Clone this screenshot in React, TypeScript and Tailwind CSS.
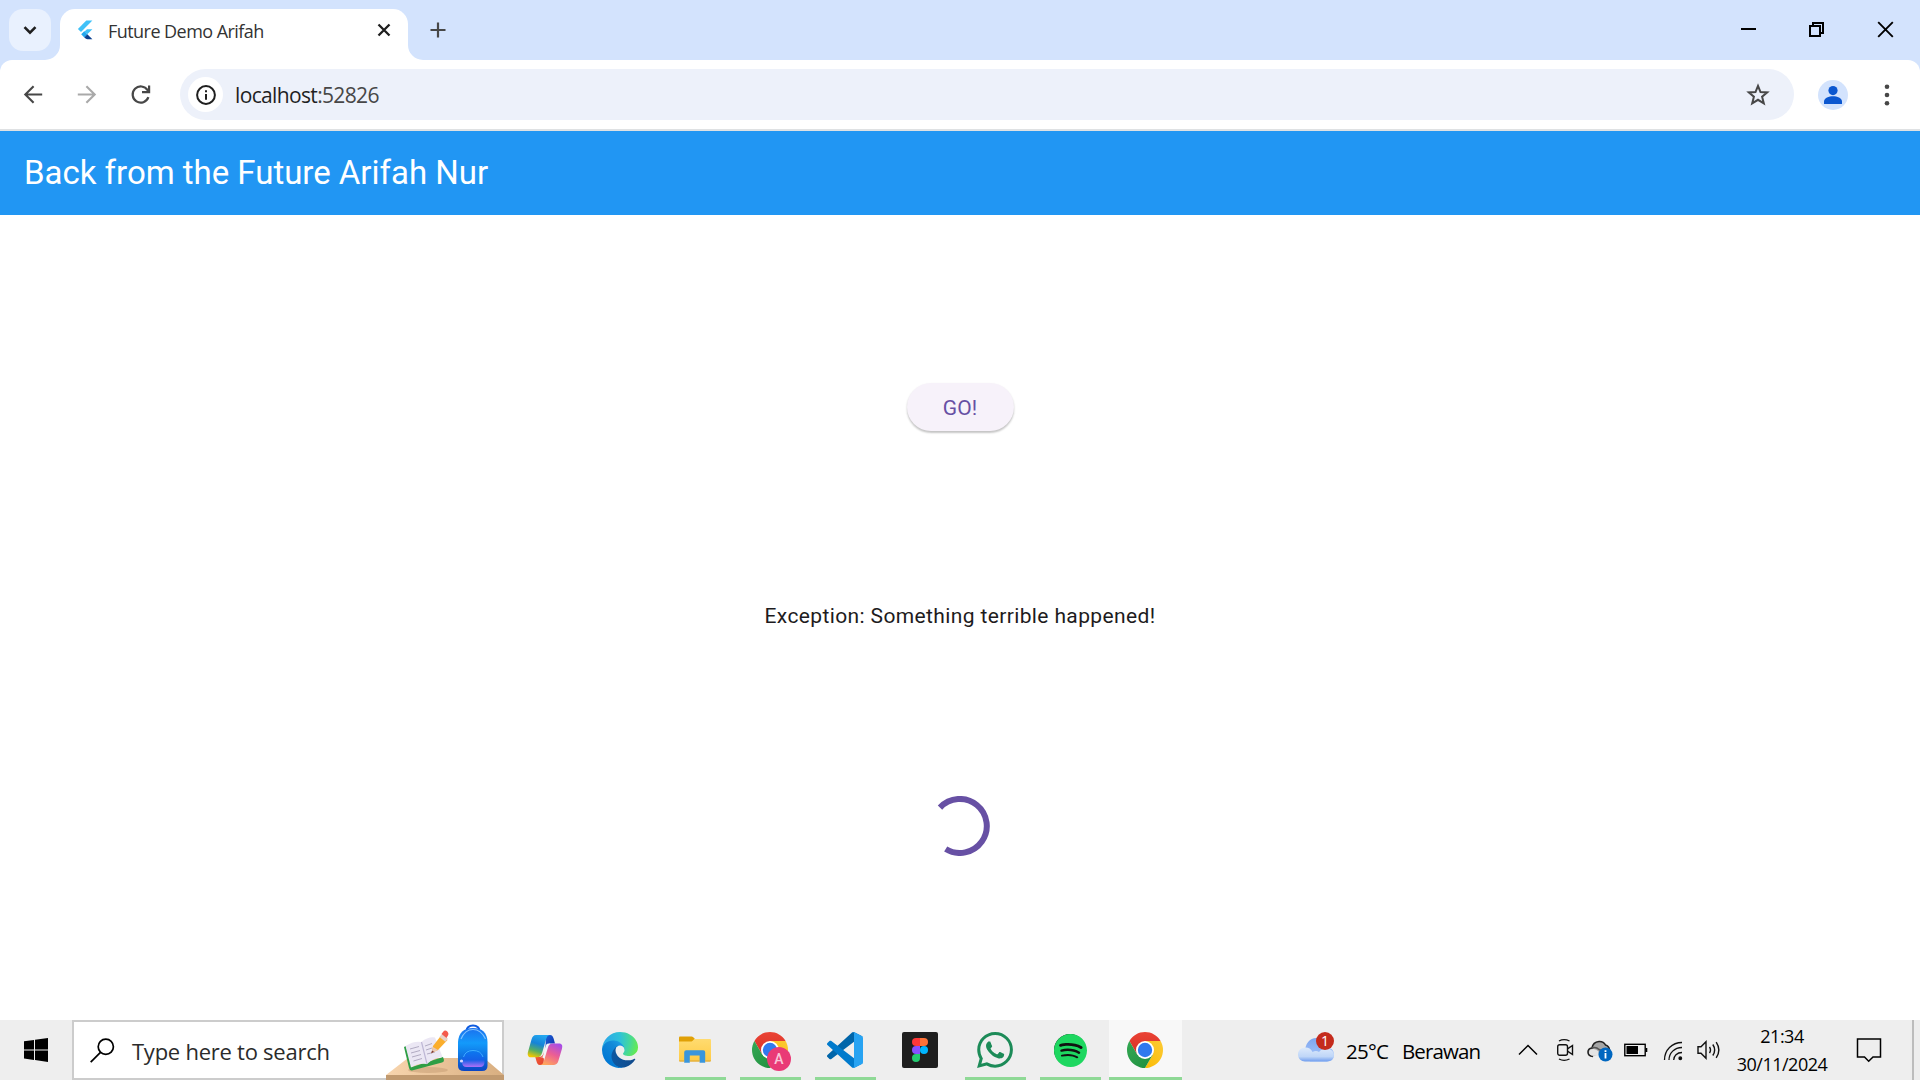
import React from 'react';
import { SiSpotify, SiWhatsapp } from 'react-icons/si';

/* ---------- Browser icons ---------- */

function FlutterLogo() {
  return (
    <svg className="block h-[20px] w-[16px]" viewBox="0 0 16 20">
      <path d="M9.3 0.6H15.4L4 12L0.9 8.9Z" fill="#3FC1F8" />
      <path d="M10 9.2H15.4L10.2 14.3L7.2 11.7Z" fill="#3FC1F8" />
      <path d="M4.2 14.3L7.2 11.3L10.4 14.4L7.3 17.5Z" fill="#24A8EE" />
      <path d="M7.3 17.4L10.3 14.3L15.4 19.3H10.5Q9.4 19.3 8.6 18.6Z" fill="#0A3F8F" />
    </svg>
  );
}

function ArrowIcon({ className }: { className: string }) {
  return (
    <svg className={className} viewBox="0 0 27 27" fill="none" stroke="currentColor" strokeWidth="2.1">
      <path d="M22.2 13.5H5.6M13.6 5.2L5.3 13.5L13.6 21.8" />
    </svg>
  );
}

function ReloadIcon() {
  return (
    <svg className="block size-[27px]" viewBox="0 0 27 27" fill="none" stroke="#474747" strokeWidth="2.2">
      <path d="M21.4 16.2A8.1 8.1 0 1 1 20.6 9.2L22 11" />
      <path d="M22.1 4.6V11.2H15" />
    </svg>
  );
}

function InfoIcon() {
  return (
    <svg className="block size-[20px]" viewBox="0 0 20 20" fill="none" stroke="#1f1f1f">
      <circle cx="10" cy="10" r="8.9" strokeWidth="2" />
      <path d="M10 9V14.8M10 5.2V7.2" strokeWidth="2" />
    </svg>
  );
}

function StarIcon() {
  return (
    <svg className="block size-[24px]" viewBox="0 0 24 24" fill="none" stroke="#474747" strokeWidth="2">
      <path d="M12 2.8L14.5 9L21.2 9.4L16.1 13.7L17.8 20.4L12 16.8L6.2 20.4L7.9 13.7L2.8 9.4L9.5 9Z" />
    </svg>
  );
}

/* ---------- App logos ---------- */

function ChromeLogo() {
  return (
    <svg className="block size-[36px]" viewBox="0 0 48 48">
      <defs>
        <linearGradient id="chromeRed" x1="0" y1="1" x2="0" y2="0">
          <stop offset="0" stopColor="#D93025" />
          <stop offset="1" stopColor="#EA4335" />
        </linearGradient>
        <linearGradient id="chromeYellow" x1="0" y1="1" x2="1" y2="0">
          <stop offset="0" stopColor="#FBBC04" />
          <stop offset="1" stopColor="#FCC934" />
        </linearGradient>
        <linearGradient id="chromeGreen" x1="0" y1="0" x2="1" y2="1">
          <stop offset="0" stopColor="#34A853" />
          <stop offset="1" stopColor="#1E8E3E" />
        </linearGradient>
      </defs>
      <path d="M24 12H44.78A24 24 0 0 0 3.22 12L13.61 30Z" fill="url(#chromeRed)" />
      <path d="M24 12L34.39 30L24 48A24 24 0 0 0 44.78 12Z" fill="url(#chromeYellow)" />
      <path d="M34.39 30L24 34L13.61 30L3.22 12A24 24 0 0 0 24 48Z" fill="url(#chromeGreen)" />
      <circle cx="24" cy="24" r="12" fill="#fff" />
      <circle cx="24" cy="24" r="9.6" fill="#2F79EE" />
    </svg>
  );
}

function CopilotLogo() {
  return (
    <svg className="block h-[32px] w-[36px]" viewBox="0 0 36 32">
      <defs>
        <linearGradient id="copA" x1="0.6" y1="0" x2="0.3" y2="1">
          <stop offset="0" stopColor="#22A7F0" />
          <stop offset="0.4" stopColor="#1683D8" />
          <stop offset="0.72" stopColor="#57AE62" />
          <stop offset="1" stopColor="#F2C800" />
        </linearGradient>
        <linearGradient id="copB" x1="0.8" y1="0" x2="0.3" y2="1">
          <stop offset="0" stopColor="#A64CE8" />
          <stop offset="0.5" stopColor="#EC5F93" />
          <stop offset="1" stopColor="#FFA65C" />
        </linearGradient>
        <linearGradient id="copC" x1="0" y1="0" x2="1" y2="1">
          <stop offset="0" stopColor="#1C63D8" />
          <stop offset="1" stopColor="#0C2BA8" />
        </linearGradient>
        <linearGradient id="copD" x1="0" y1="0" x2="1" y2="1">
          <stop offset="0" stopColor="#F7633C" />
          <stop offset="1" stopColor="#E2412F" />
        </linearGradient>
      </defs>
      <path d="M19 1H23C25.2 1 26 2.6 26.6 4.6L28 9.5H24C20 9.5 19.2 12 18.4 15Z" fill="url(#copC)" />
      <path d="M16.5 31H13C10.6 31 10 29.2 9.4 27L8.2 22.8H12C15.6 22.8 16.4 20.6 17.4 17Z" fill="url(#copD)" />
      <path d="M15.8 22.5L19.3 10.500Q20 9.300 23 9.500Q21.600 10.500 20.900 13.200L17.300 25Q16.500 23 13 23Q15 23 15.800 22.500Z" fill="#F4F4F8" />
      <path d="M9 1H23C20.6 1.2 19.8 3 19.1 5.3L15.2 18.5C14.3 21.4 13 23.3 10 23.3H4C.8 23.3 .2 20.4 1.1 17.4L4.5 5.5C5.4 2.6 6.6 1 9 1Z" fill="url(#copA)" />
      <path d="M27 31H13C15.5 30.8 16.4 29 17 26.8L20.9 13.7C21.8 10.7 23.1 9.6 26 9.6H32C35.2 9.6 35.8 12 34.9 14.9L31.5 26.6C30.6 29.5 29.4 31 27 31Z" fill="url(#copB)" />
    </svg>
  );
}

function EdgeLogo() {
  return (
    <svg className="block size-[36px]" viewBox="4.6 4.9 256 256">
      <defs>
        <linearGradient id="edgeA" gradientUnits="userSpaceOnUse" x1="63" y1="180" x2="241" y2="180">
          <stop offset="0" stopColor="#0C59A4" />
          <stop offset="1" stopColor="#114A8B" />
        </linearGradient>
        <linearGradient id="edgeB" gradientUnits="userSpaceOnUse" x1="157" y1="100" x2="46" y2="222">
          <stop offset="0" stopColor="#1B9DE2" />
          <stop offset="0.3" stopColor="#1389D8" />
          <stop offset="1" stopColor="#0078D4" />
        </linearGradient>
        <radialGradient id="edgeC" gradientUnits="userSpaceOnUse" cx="30" cy="60" r="235">
          <stop offset="0" stopColor="#2CA9E8" />
          <stop offset="0.45" stopColor="#2EC2D8" />
          <stop offset="0.72" stopColor="#43D6A0" />
          <stop offset="1" stopColor="#66EB4F" />
        </radialGradient>
      </defs>
      <path fill="url(#edgeA)" d="M235.68 195.46a93.73 93.73 0 0 1-10.54 4.71 101.87 101.87 0 0 1-35.9 6.46c-47.32 0-88.54-32.55-88.54-74.32A31.48 31.48 0 0 1 117.13 105c-42.8 1.8-53.8 46.4-53.8 72.53 0 73.88 68.09 81.37 82.76 81.37 7.91 0 19.84-2.3 27-4.56l1.31-.44a128.34 128.34 0 0 0 66.6-52.8 4 4 0 0 0-5.32-5.64Z" />
      <path fill="url(#edgeB)" d="M110.34 246.34A79.2 79.2 0 0 1 87.6 225a80.72 80.72 0 0 1 29.53-120c3.12-1.47 8.45-4.13 15.54-4a32.35 32.35 0 0 1 25.69 13 31.88 31.88 0 0 1 6.36 18.66c0-.21 24.46-79.6-80-79.6-43.9 0-80 41.66-80 78.21a130.15 130.15 0 0 0 12.11 56 128 128 0 0 0 156.38 67.11 75.55 75.55 0 0 1-62.78-8Z" />
      <path fill="url(#edgeC)" d="M156.94 153.78c-.81 1.05-3.3 2.5-3.3 5.66 0 2.61 1.7 5.12 4.72 7.23 14.38 10 41.49 8.68 41.56 8.68a59.56 59.56 0 0 0 30.27-8.35 61.38 61.38 0 0 0 30.43-52.88c.26-22.41-8-37.31-11.34-43.91-21.19-41.45-66.93-65.29-116.67-65.29a128 128 0 0 0-128 126.2c.48-36.54 36.8-66.05 80-66.05 3.5 0 23.46.34 42 10.07 16.34 8.58 24.9 18.94 30.85 29.21 6.18 10.67 7.28 24.15 7.28 29.52s-2.74 13.33-7.8 19.91Z" />
    </svg>
  );
}

function ExplorerLogo() {
  return (
    <svg className="block h-[28px] w-[32px]" viewBox="0 0 32 28">
      <defs>
        <linearGradient id="folder" x1="0" y1="0" x2="0" y2="1">
          <stop offset="0" stopColor="#FFDB70" />
          <stop offset="1" stopColor="#FFCB45" />
        </linearGradient>
      </defs>
      <path d="M0 1.5Q0 .5 1 .5H12.6Q13.4 .5 14 1.1L16.2 3.3V8H0Z" fill="#E0A006" />
      <path d="M0 5.6H11.6Q12.6 5.6 13.4 4.9L15.4 3H31Q32 3 32 4V24.4Q32 25.4 31 25.4H1Q0 25.4 0 24.4Z" fill="url(#folder)" />
      <path d="M5.2 26.8V16.2Q5.2 14.2 7.2 14.2H24.2Q26.2 14.2 26.2 16.2V26.8H20.6V19.4H10.8V26.8Z" fill="#3A96DD" />
      <path d="M0 24.6H5.2V25.6H1Q0 25.6 0 24.6ZM10.8 24.6H20.6V25.6H10.8ZM26.2 24.6H32Q32 25.6 31 25.6H26.2Z" fill="#D9A63A" />
    </svg>
  );
}

function VsCodeLogo() {
  return (
    <svg className="block size-[36px]" viewBox="0 0 100 100">
      <path fill="#0065A9" d="M96.4614 10.7962L75.8569 0.875542C73.4719 -0.272773 70.6217 0.211611 68.75 2.08333L1.29858 63.5832C-0.515693 65.2373 -0.513607 68.0937 1.30308 69.7452L6.81272 74.754C8.29793 76.1042 10.5347 76.2036 12.1338 74.9905L93.3609 13.3699C96.086 11.3026 100 13.2462 100 16.6667V16.4275C100 14.0265 98.6246 11.8378 96.4614 10.7962Z" />
      <path fill="#007ACC" d="M96.4614 89.2038L75.8569 99.1245C73.4719 100.273 70.6217 99.7884 68.75 97.9167L1.29858 36.4169C-0.515693 34.7627 -0.513607 31.9063 1.30308 30.2548L6.81272 25.246C8.29793 23.8958 10.5347 23.7964 12.1338 25.0095L93.3609 86.6301C96.086 88.6974 100 86.7538 100 83.3334V83.5726C100 85.9735 98.6246 88.1622 96.4614 89.2038Z" />
      <path fill="#27A3F2" d="M75.8578 99.1263C73.4721 100.274 70.6219 99.7885 68.75 97.9166C71.0564 100.223 75 98.5895 75 95.3278V4.67213C75 1.41039 71.0564 -0.223106 68.75 2.08329C70.6219 0.211402 73.4721 -0.273666 75.8578 0.873633L96.4587 10.7807C98.6234 11.8217 100 14.0112 100 16.4132V83.5871C100 85.9891 98.6234 88.1786 96.4586 89.2196L75.8578 99.1263Z" />
    </svg>
  );
}

function FigmaLogo() {
  return (
    <div className="flex size-[36px] items-center justify-center rounded-[2px] bg-[#1e1e1e]">
      <svg className="block h-[24px] w-[16px]" viewBox="0 0 16 24">
        <path d="M4 0H8V8H4A4 4 0 0 1 4 0Z" fill="#FF3737" />
        <path d="M8 0H12A4 4 0 0 1 12 8H8Z" fill="#FF7237" />
        <path d="M4 8H8V16H4A4 4 0 0 1 4 8Z" fill="#874FFF" />
        <circle cx="12" cy="12" r="4" fill="#00B6FF" />
        <path d="M4 16H8V20A4 4 0 1 1 4 16Z" fill="#24CB71" />
      </svg>
    </div>
  );
}

function ChromeProfileLogo() {
  return (
    <div className="relative">
      <ChromeLogo />
      <div className="absolute top-[15px] left-[15px] flex size-[24px] items-center justify-center rounded-full bg-[#e93a76] font-['Roboto',sans-serif] text-[14px] font-medium text-[#f9c6d8]">
        A
      </div>
    </div>
  );
}

function SpotifyLogo() {
  return (
    <div className="flex size-[32px] items-center justify-center rounded-full bg-[#111]">
      <SiSpotify className="size-[33px] shrink-0 text-[#1ed760]" />
    </div>
  );
}

function DeskIllustration() {
  return (
    <svg className="block h-[58px] w-[118px]" viewBox="0 0 118 58">
      <defs>
        <linearGradient id="desk" x1="0" y1="0" x2="1" y2="0">
          <stop offset="0" stopColor="#F8D5AE" />
          <stop offset="1" stopColor="#D8AE80" />
        </linearGradient>
        <linearGradient id="bag" x1="0" y1="0" x2="0" y2="1">
          <stop offset="0" stopColor="#1B70EE" />
          <stop offset="0.35" stopColor="#139AFB" />
          <stop offset="1" stopColor="#0B46C4" />
        </linearGradient>
        <linearGradient id="pocket" x1="0" y1="0" x2="0" y2="1">
          <stop offset="0" stopColor="#0A7CF0" />
          <stop offset="0.6" stopColor="#1560E8" />
          <stop offset="1" stopColor="#B070F8" />
        </linearGradient>
      </defs>
      <path d="M22 36H98L118 53H0Z" fill="url(#desk)" />
      <rect y="53" width="118" height="5" fill="#C19A70" />
      <ellipse cx="42" cy="48" rx="20" ry="3" fill="#C79F76" opacity="0.55" />
      <path d="M18 25L20 24L26 45L57 35L58 38Q58 40 56 40.600L26 48.500Q24 49 23 46Z" fill="#2E9E45" />
      <path d="M19.500 24Q28 18.500 35.500 20Q42 14.500 49 15.500L56.500 35Q47 36 41 42Q32 40.500 25 45.500Z" fill="#EBE7F4" />
      <path d="M35.500 20L41 42" stroke="#BDB6D4" strokeWidth="1.200" />
      <path d="M24 27L33 24.500M25 31L34 28.500M26 35L35 32.500M27.500 39L36 36.500M39 24L46 21.500M40 28L46 26M41 32L49 30" stroke="#AAA4BC" strokeWidth="0.900" />
      <path d="M45.500 31L47 24L55.500 13L61.500 18L52 28Z" fill="#FBAE2C" />
      <path d="M45.500 31L47 25L52 28Z" fill="#E8C7B4" />
      <path d="M45.200 31.400L46 28.500L48 29.700Z" fill="#7B3A3A" />
      <path d="M53.500 15L56 12L62 16.800L59.300 19.700Z" fill="#E8D2C8" />
      <path d="M55.500 12L57 10Q59 7.500 61.300 9.500Q63.500 11.800 61.500 14.300L60.500 16Z" fill="#F45A4C" />
      <path d="M80.500 9Q81 3.500 87 3.500Q93 3.500 93.500 9" fill="none" stroke="#0E5BE0" strokeWidth="2.200" />
      <path d="M72 20Q73 6 87 6Q101 6 101.500 20V44Q101.500 49 96 49H78Q72 49 72 44Z" fill="url(#bag)" />
      <path d="M75 17Q79 7.500 87 7.500Q95 7.500 99.500 17" fill="none" stroke="#7EC1FF" strokeWidth="1.200" />
      <path d="M76 40Q76 27.500 87 27.500Q98.500 27.500 98.500 40Q98.500 45 94 45H80.500Q76 45 76 40Z" fill="url(#pocket)" />
      <path d="M77.500 35Q79.500 28.500 87 28.500Q95 28.500 97 35" fill="none" stroke="#3FB0FF" strokeWidth="1" />
      <circle cx="75.500" cy="39" r="1.600" fill="#D5D9FF" />
    </svg>
  );
}

/* ---------- Browser chrome ---------- */

function TabStrip() {
  return (
    <div className="flex h-[60px] items-start bg-[#d3e3fd] pt-[9px]">
      <div className="ml-[9px] flex size-[42px] items-center justify-center rounded-[14px] bg-[#e9f1fe]">
        <svg className="block size-[14px]" viewBox="0 0 14 14" fill="none" stroke="#1f1f1f" strokeWidth="2.6">
          <path d="M1.500 4.200L7 9.700L12.500 4.200" />
        </svg>
      </div>
      <div className="relative ml-[9px] flex h-[51px] w-[348px] items-center rounded-t-[15px] bg-white pb-[9px] pl-[17px]">
        <svg className="absolute bottom-0 -left-[15px] size-[15px]" viewBox="0 0 15 15">
          <path d="M15 0V15H0A15 15 0 0 0 15 0Z" fill="#fff" />
        </svg>
        <svg className="absolute -right-[15px] bottom-0 size-[15px]" viewBox="0 0 15 15">
          <path d="M0 0V15H15A15 15 0 0 1 0 0Z" fill="#fff" />
        </svg>
        <FlutterLogo />
        <span className="mt-[2px] ml-[15px] w-[267px] text-[18px] leading-[24px] tracking-[-0.55px] whitespace-nowrap text-[#333]">
          Future Demo Arifah
        </span>
        <svg className="block size-[18px]" viewBox="0 0 18 18" fill="none" stroke="#1f1f1f" strokeWidth="2.300">
          <path d="M3.500 3.500L14.500 14.500M14.500 3.500L3.500 14.500" />
        </svg>
      </div>
      <svg className="mt-[13px] ml-[22px] block size-[16px]" viewBox="0 0 16 16" stroke="#474747" strokeWidth="2.200">
        <path d="M8 0.500V15.500M0.500 8H15.500" />
      </svg>
      <div className="mt-[12px] mr-[26px] ml-auto flex items-center gap-[52px]">
        <svg className="block size-[17px]" viewBox="0 0 17 17">
          <rect x="2" y="7" width="15" height="2" fill="#000" />
        </svg>
        <svg className="block size-[17px]" viewBox="0 0 17 17" fill="none" stroke="#000" strokeWidth="2">
          <rect x="2" y="5" width="10" height="10" />
          <path d="M5 5V2H15V12H12" />
        </svg>
        <svg className="block size-[17px]" viewBox="0 0 17 17" fill="none" stroke="#000" strokeWidth="1.900">
          <path d="M1.200 1.200L15.800 15.800M15.800 1.200L1.200 15.800" />
        </svg>
      </div>
    </div>
  );
}

function Toolbar() {
  return (
    <div className="bg-[#d3e3fd]">
      <div className="flex h-[69px] items-center rounded-t-[12px] bg-white pl-[20px]">
        <ArrowIcon className="block size-[27px] text-[#474747]" />
        <ArrowIcon className="ml-[26px] block size-[27px] rotate-180 text-[#a9a9a9]" />
        <div className="ml-[27px]">
          <ReloadIcon />
        </div>
        <div className="ml-[26px] flex h-[51px] w-[1614px] items-center rounded-full bg-[#edf1fa] pr-[24px] pl-[8px]">
          <div className="flex size-[35px] items-center justify-center rounded-full bg-white">
            <InfoIcon />
          </div>
          <span className="ml-[12px] text-[21px] leading-[28px] tracking-[-0.65px] text-[#1f1f1f]">
            localhost<span className="text-[#474747]">:52826</span>
          </span>
          <div className="ml-auto">
            <StarIcon />
          </div>
        </div>
        <div className="ml-[24px] flex size-[30px] items-center justify-center rounded-full bg-[#d3e3fd]">
          <svg className="block size-[18px]" viewBox="0 0 18 18" fill="#0B57D0">
            <circle cx="9" cy="4.600" r="4.600" />
            <path d="M0 18V15.500C0 12 5 10.300 9 10.300S18 12 18 15.500V18Z" />
          </svg>
        </div>
        <svg className="ml-[36px] block h-[22px] w-[6px]" viewBox="0 0 6 22" fill="#474747">
          <circle cx="3" cy="2.700" r="2.300" />
          <circle cx="3" cy="11" r="2.300" />
          <circle cx="3" cy="19.300" r="2.300" />
        </svg>
      </div>
      <div className="h-[2px] bg-[#dfe1e3]" />
    </div>
  );
}

/* ---------- Page ---------- */

function Page() {
  return (
    <main className="flex h-[889px] flex-col bg-white font-['Roboto',sans-serif]">
      <header className="flex h-[84px] items-center bg-[#2196f3] pl-[24px]">
        <h1 className="text-[33px] leading-[42px] tracking-[-0.02px] whitespace-nowrap text-white">
          Back from the Future Arifah Nur
        </h1>
      </header>
      <div className="flex flex-1 flex-col items-center pt-[168px]">
        <button className="flex h-[48px] w-[107px] items-center justify-center rounded-full bg-[#f7f2fa] pt-[1px] text-[21px] leading-[30px] tracking-[0.15px] text-[#6750a4] shadow-[0_2px_2px_rgba(0,0,0,0.2),0_1px_3px_rgba(0,0,0,0.06)]">
          GO!
        </button>
        <p className="mt-[170px] text-[21px] leading-[30px] tracking-[0.375px] whitespace-nowrap text-[#1d1b20]">
          Exception: Something terrible happened!
        </p>
        <svg className="mt-[165px] block size-[60px]" viewBox="0 0 60 60" fill="none" stroke="#6750a4" strokeWidth="6">
          <path d="M10 11.600A27 27 0 1 1 15.700 53" />
        </svg>
      </div>
    </main>
  );
}

/* ---------- Taskbar ---------- */

type AppItem = { id: string; icon: React.ReactNode; running?: boolean; active?: boolean };

const apps: AppItem[] = [
  { id: 'copilot', icon: <CopilotLogo /> },
  { id: 'edge', icon: <EdgeLogo /> },
  { id: 'explorer', icon: <ExplorerLogo />, running: true },
  { id: 'chrome-profile', icon: <ChromeProfileLogo />, running: true },
  { id: 'vscode', icon: <VsCodeLogo />, running: true },
  { id: 'figma', icon: <FigmaLogo /> },
  { id: 'whatsapp', icon: <SiWhatsapp className="block size-[36px] text-[#1c8b58]" />, running: true },
  { id: 'spotify', icon: <SpotifyLogo />, running: true },
  { id: 'chrome', icon: <ChromeLogo />, running: true, active: true },
];

function TaskbarApp({ item }: { item: AppItem }) {
  return (
    <div className="flex h-[60px] w-[75px] justify-center">
      <div className={item.active ? 'flex w-[73px] flex-col items-center bg-[#f8f8f8]' : 'flex w-[61px] flex-col items-center'}>
        <div className="flex w-full flex-1 items-center justify-center pt-[3px] pr-[1px]">{item.icon}</div>
        <div className={item.running ? 'h-[3px] w-full bg-[#8fd996]' : 'h-[3px] w-full'} />
      </div>
    </div>
  );
}

function Weather() {
  return (
    <div className="flex items-center">
      <div className="relative">
        <svg className="block h-[36px] w-[36px]" viewBox="0 0 36 36">
          <defs>
            <linearGradient id="cloudBack" x1="0" y1="0" x2="0" y2="1">
              <stop offset="0" stopColor="#7EA6F0" />
              <stop offset="1" stopColor="#A9C8FA" />
            </linearGradient>
            <linearGradient id="cloudFront" x1="0" y1="0" x2="0" y2="1">
              <stop offset="0" stopColor="#DDEAFB" />
              <stop offset="0.65" stopColor="#BFD6F8" />
              <stop offset="1" stopColor="#6F9DEE" />
            </linearGradient>
          </defs>
          <path d="M7 20C7 12 11.500 6 18.500 6C25 6 28 11 28.500 15Q36 16 36 23Q35.500 29.500 29 29.500H12Z" fill="url(#cloudBack)" />
          <path d="M7 29.500C3 29.500 0 26.500 0 22.500S3 15.500 7.500 15.500C11 15.500 13.500 17.500 14.500 20Q18 18 21 20Q24 16 29 16.500Q36 17.500 36 23Q35.500 29.500 29 29.500Z" fill="url(#cloudFront)" />
        </svg>
        <div className="absolute top-0 left-[18px] flex size-[18px] items-center justify-center rounded-full bg-[#c42b1c] text-[14px] leading-[18px] text-white">
          1
        </div>
      </div>
      <span className="mt-[2px] ml-[12px] w-[56px] text-[20.5px] tracking-[-0.7px]">25°C</span>
      <span className="mt-[2px] text-[20.5px] tracking-[-0.9px]">Berawan</span>
    </div>
  );
}

function Tray() {
  return (
    <div className="flex items-center">
      <svg className="block h-[12px] w-[20px]" viewBox="0 0 20 12" fill="none" stroke="#000" strokeWidth="1.500">
        <path d="M1 10.500L10 1.500L19 10.500" />
      </svg>
      <svg className="ml-[18px] block h-[24px] w-[18px]" viewBox="0 0 18 24" fill="none" stroke="#111" strokeWidth="1.400">
        <path d="M3 3Q8 .2 13.500 3M3 21Q8 23.800 13.500 21" />
        <rect x="1.700" y="6.700" width="9.800" height="10.600" rx="2" />
        <path d="M11.500 10.800L16.500 7.500V16.500L11.500 13.200" />
      </svg>
      <svg className="mt-[2px] ml-[13px] block h-[22px] w-[26px]" viewBox="0 0 26 22">
        <path d="M6 16.500Q1 16 1 12Q1 8.500 5 8Q6 2 12 1.500Q16.500 1.200 18.500 5Q22 6 22.500 10" fill="#a6a6a6" stroke="#222" strokeWidth="1.600" />
        <path d="M6.500 15.700Q2 15.500 2 12.200Q2.500 9 6 9Q9 8.500 11.500 11.500L12 15.700Z" fill="#e4e4e4" />
        <path d="M5 8Q9 6.500 12 9.500L20 13" fill="none" stroke="#555" strokeWidth="1.600" />
        <circle cx="18.500" cy="14.500" r="7" fill="#0067C0" />
        <path d="M18.500 13V18.500M18.500 10.300V12" stroke="#fff" strokeWidth="1.800" />
      </svg>
      <svg className="ml-[11px] block h-[14px] w-[24px]" viewBox="0 0 24 14">
        <rect x="0.800" y="1.300" width="20.400" height="11.400" fill="none" stroke="#000" strokeWidth="1.400" />
        <rect x="2.500" y="3" width="11.500" height="8" fill="#000" />
        <rect x="21.500" y="5" width="1.800" height="4" fill="#000" />
      </svg>
      <svg className="mt-[2px] ml-[15px] block size-[20px]" viewBox="0 0 20 20" fill="none" stroke="#111" strokeWidth="1.300">
        <path d="M1.500 19C1.500 9 9 1.500 19 1.500M6 19C6 12 11.500 6.500 19 6.500M10.700 19C10.700 15 14 11.500 19 11.500" />
        <circle cx="17.300" cy="17.300" r="1.300" fill="#000" />
      </svg>
      <svg className="ml-[14px] block h-[20px] w-[24px]" viewBox="0 0 24 20" fill="none" stroke="#111" strokeWidth="1.400">
        <path d="M1 6.700H4L9 1.700V18.300L4 13.300H1Z" />
        <path d="M12.500 7Q14.500 10 12.500 13M15.800 4.500Q19.500 10 15.800 15.500M19.200 2.200Q24.500 10 19.200 17.800" />
      </svg>
    </div>
  );
}

function Taskbar() {
  return (
    <footer className="flex h-[60px] items-center bg-[#eee] text-black">
      <div className="flex w-[72px] items-center justify-center">
        <svg className="block size-[24px]" viewBox="0 0 24 24" fill="#000">
          <path d="M0 3.300L10 1.900V11.400H0ZM11 1.800L24 0V11.400H11ZM0 12.400H10V21.900L0 20.600ZM11 12.400H24V24L11 22.100Z" />
        </svg>
      </div>
      <div className="relative flex h-[60px] w-[432px] items-center border-2 border-[#ccc] bg-white pl-[16px]">
        <svg className="block size-[25px]" viewBox="0 0 25 25" fill="none" stroke="#000" strokeWidth="1.700">
          <circle cx="15.800" cy="8.700" r="7.600" />
          <path d="M10.500 14.300L0.700 24.200" />
        </svg>
        <span className="mt-[2px] ml-[17px] text-[22px] leading-[30px] tracking-[-0.25px] whitespace-nowrap text-[#2b2b2b]">
          Type here to search
        </span>
        <div className="absolute -right-[2px] -bottom-[2px]">
          <DeskIllustration />
        </div>
      </div>
      <div className="ml-[4px] flex">
        {apps.map((item) => (
          <TaskbarApp key={item.id} item={item} />
        ))}
      </div>
      <div className="ml-[115px] w-[220px]">
        <Weather />
      </div>
      <Tray />
      <div className="ml-[5px] w-[112px] text-center text-[18px] leading-[28px] tracking-[-0.5px]">
        <div>21:34</div>
        <div>30/11/2024</div>
      </div>
      <svg className="ml-[18px] block h-[26px] w-[26px]" viewBox="0 0 26 26" fill="none" stroke="#000" strokeWidth="1.500">
        <path d="M1.500 2H24.500V20H17L12.700 24.300L8.500 20H1.500Z" />
      </svg>
      <div className="mr-[6px] ml-auto h-[60px] w-[2px] bg-[#bdbdbd]" />
    </footer>
  );
}

export default function App() {
  return (
    <div className="h-[1080px] w-[1920px] overflow-hidden bg-white font-['Open_Sans','Noto_Sans',sans-serif]">
      <TabStrip />
      <Toolbar />
      <Page />
      <Taskbar />
    </div>
  );
}
